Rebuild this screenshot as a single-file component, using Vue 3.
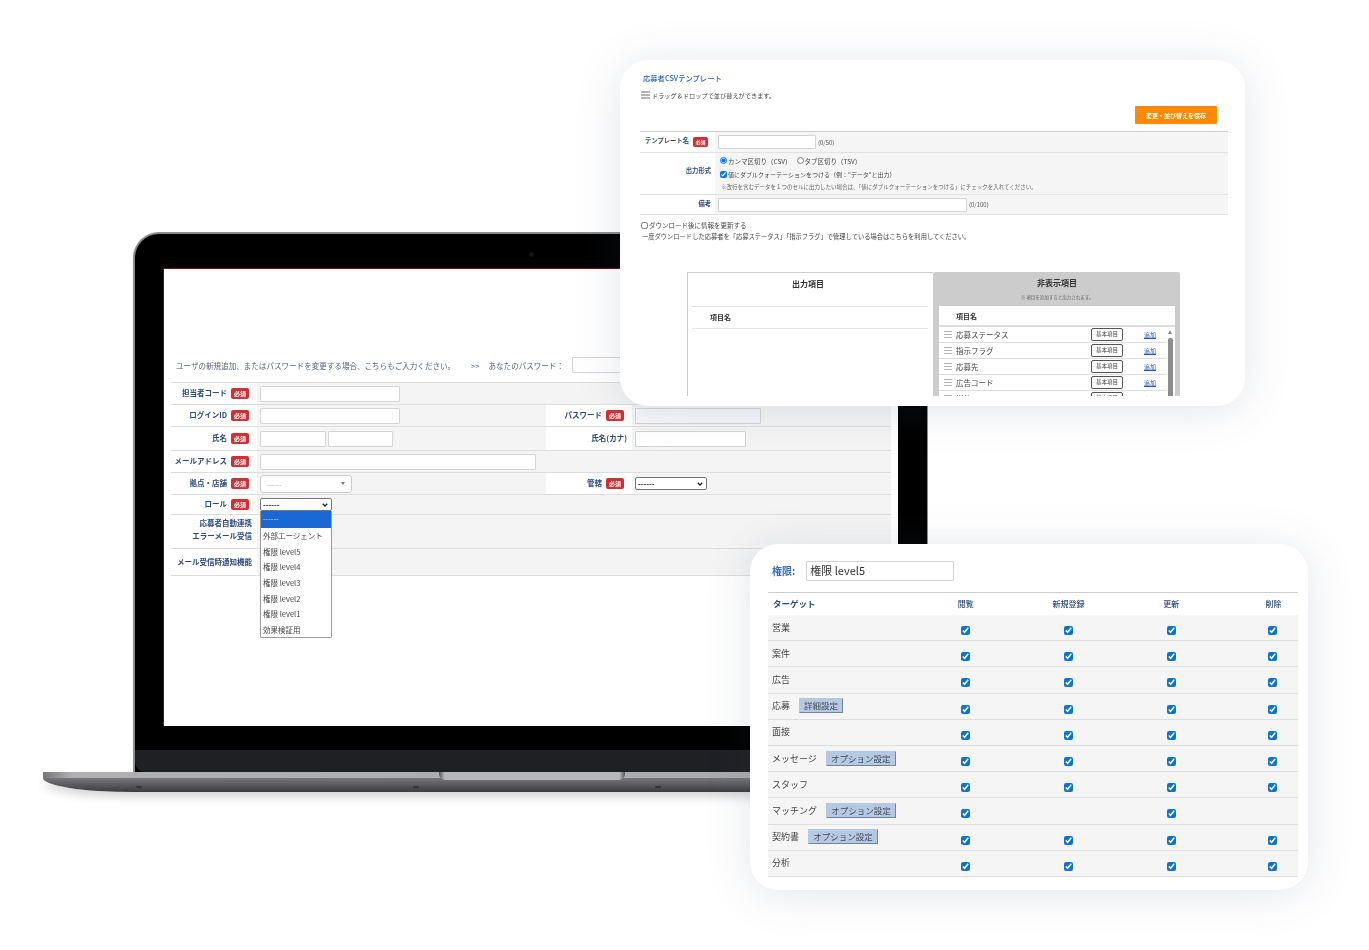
<template>
  <div class="stage">
    <!-- ノートPC -->
    <div class="laptop">
      <div class="lid">
        <span class="camera"></span>
        <div class="screen">
          <div class="pw-line">
            <span class="pw-msg">ユーザの新規追加、またはパスワードを変更する場合、こちらもご入力ください。</span>
            <span class="pw-arrow">&gt;&gt;</span>
            <span class="pw-label">あなたのパスワード：</span>
            <input class="field pw-input" />
          </div>

          <div class="form">
            <div class="row h22">
              <div class="lab"><span>担当者コード</span><em class="req">必須</em></div>
              <div class="val"><input class="field w140" /></div>
            </div>
            <div class="row h22">
              <div class="lab"><span>ログインID</span><em class="req">必須</em></div>
              <div class="val"><input class="field w140" /></div>
              <div class="lab"><span>パスワード</span><em class="req">必須</em></div>
              <div class="val val2"><input class="field w126 tinted" /></div>
            </div>
            <div class="row h24">
              <div class="lab"><span>氏名</span><em class="req">必須</em></div>
              <div class="val gap2"><input class="field w66" /><input class="field w65" /></div>
              <div class="lab plain"><span>氏名(カナ)</span></div>
              <div class="val val2"><input class="field w111" /></div>
            </div>
            <div class="row h22">
              <div class="lab"><span>メールアドレス</span><em class="req">必須</em></div>
              <div class="val"><input class="field w276" /></div>
            </div>
            <div class="row h22">
              <div class="lab"><span>拠点・店舗</span><em class="req">必須</em></div>
              <div class="val">
                <div class="fake-select">
                  <span>------</span>
                  <i class="caret"></i>
                </div>
              </div>
              <div class="lab"><span>管轄</span><em class="req">必須</em></div>
              <div class="val val2">
                <select class="native w72"><option>------</option></select>
              </div>
            </div>
            <div class="row h20">
              <div class="lab"><span>ロール</span><em class="req">必須</em></div>
              <div class="val role-cell">
                <select class="native w72 focus"><option>------</option></select>
                <ul class="dropdown">
                  <li v-for="(r, i) in roles" :key="r" :class="{ on: i === 0 }">{{ r }}</li>
                </ul>
              </div>
            </div>
            <div class="row h34">
              <div class="lab plain two">
                <span>応募者自動連携</span>
                <span>エラーメール受信</span>
              </div>
              <div class="val"></div>
            </div>
            <div class="row h27">
              <div class="lab plain"><span>メール受信時通知機能</span></div>
              <div class="val"></div>
            </div>
          </div>
        </div>
        <div class="chin"></div>
      </div>
      <div class="base">
        <div class="base-top"><span class="notch"></span></div>
        <div class="base-body">
          <i class="foot f1"></i><i class="foot f2"></i><i class="foot f3"></i>
        </div>
      </div>
    </div>

    <!-- CSVテンプレート -->
    <section class="card card-csv">
      <div class="csv-inner">
        <h2 class="csv-title">応募者CSVテンプレート</h2>
        <p class="csv-drag"><span class="burger big"><i></i><i></i><i></i></span>ドラッグ＆ドロップで並び替えができます。</p>
        <div class="csv-actions"><button class="save">変更・並び替えを保存</button></div>

        <div class="csv-table">
          <div class="csv-row r21">
            <div class="csv-lab"><span>テンプレート名</span><em class="req mini">必須</em></div>
            <div class="csv-val"><input class="field c98" /><small>(0/50)</small></div>
          </div>
          <div class="csv-row r42">
            <div class="csv-lab up"><span>出力形式</span></div>
            <div class="csv-val stack">
              <div class="opt">
                <label><input type="radio" name="fmt" checked />カンマ区切り（CSV）</label>
                <label><input type="radio" name="fmt" />タブ区切り（TSV）</label>
              </div>
              <div class="opt narrow"><label><input type="checkbox" checked />値にダブルクォーテーションをつける（例："データ"と出力）</label></div>
              <p class="hint">※改行を含むデータを１つのセルに出力したい場合は、「値にダブルクォーテーションをつける」にチェックを入れてください。</p>
            </div>
          </div>
          <div class="csv-row r20">
            <div class="csv-lab"><span>備考</span></div>
            <div class="csv-val"><input class="field c249" /><small>(0/100)</small></div>
          </div>
        </div>

        <label class="dl-check"><input type="checkbox" />ダウンロード後に情報を更新する</label>
        <p class="dl-note">一度ダウンロードした応募者を「応募ステータス」「指示フラグ」で管理している場合はこちらを利用してください。</p>

        <div class="columns">
          <div class="col-left">
            <h3>出力項目</h3>
            <div class="col-head">項目名</div>
          </div>
          <div class="col-right">
            <h3>非表示項目</h3>
            <p class="sub">※ 項目を追加すると出力されます。</p>
            <div class="hidden-list">
              <div class="hidden-head">項目名</div>
              <div v-for="item in hiddenItems" :key="item" class="hidden-row">
                <span class="burger"><i></i><i></i><i></i></span>
                <span class="hidden-name">{{ item }}</span>
                <span class="tag">基本項目</span>
                <a class="add">追加</a>
              </div>
              <div class="scroll"><i class="thumb"></i></div>
            </div>
          </div>
        </div>
      </div>
    </section>

    <!-- 権限 -->
    <section class="card card-role">
      <div class="role-inner">
        <div class="role-top">
          <label>権限:</label>
          <input class="field role-name" value="権限 level5" />
        </div>
        <div class="perm">
          <div class="perm-head">
            <span class="target">ターゲット</span>
            <span class="mid">閲覧</span>
            <span class="mid">新規登録</span>
            <span class="mid">更新</span>
            <span class="last">削除</span>
          </div>
          <div v-for="p in perms" :key="p.name" class="perm-row">
            <div class="perm-name">
              <span>{{ p.name }}</span>
              <button v-if="p.btn" class="opt-btn" :class="p.cls">{{ p.btn }}</button>
            </div>
            <span v-for="(on, i) in p.flags" :key="i" :class="i === 3 ? 'last' : 'mid'">
              <input v-if="on" type="checkbox" checked class="cb" />
            </span>
          </div>
        </div>
      </div>
    </section>
  </div>
</template>

<script setup>
const roles = ['------', '外部エージェント', '権限 level5', '権限 level4', '権限 level3', '権限 level2', '権限 level1', '効果検証用']

const hiddenItems = ['応募ステータス', '指示フラグ', '応募先', '広告コード', '媒体']

const all = [1, 1, 1, 1]
const perms = [
  { name: '営業', flags: all },
  { name: '案件', flags: all },
  { name: '広告', flags: all },
  { name: '応募', flags: all, btn: '詳細設定', cls: 'b1' },
  { name: '面接', flags: all },
  { name: 'メッセージ', flags: all, btn: 'オプション設定', cls: 'b2' },
  { name: 'スタッフ', flags: all },
  { name: 'マッチング', flags: [1, 0, 1, 0], btn: 'オプション設定', cls: 'b2' },
  { name: '契約書', flags: all, btn: 'オプション設定', cls: 'b3' },
  { name: '分析', flags: all }
]
</script>

<style>
html,
body {
  margin: 0;
  background: #fff;
}
</style>

<style scoped>
.stage {
  position: relative;
  width: 1369px;
  height: 950px;
  overflow: hidden;
  background: #fff;
  font-family: "Noto Sans CJK JP", "Liberation Sans", sans-serif;
  color: #444;
}

p, h2, h3, ul {
  margin: 0;
  padding: 0;
}

em {
  font-style: normal;
}

input, select, button {
  font-family: inherit;
  box-sizing: border-box;
  margin: 0;
}

/* ---- ノートPC ---- */
.laptop {
  position: absolute;
  left: 43px;
  top: 232px;
  width: 974px;
  z-index: 0;
}

.lid {
  position: relative;
  margin: 0 90px;
  width: 795px;
  height: 540px;
  box-sizing: border-box;
  padding: 34px 29px 0 28px;
  background: #000;
  border: 1px solid #8c8c8c;
  border-top-width: 2px;
  border-left-width: 2px;
  border-bottom: 0;
  border-radius: 26px 26px 0 0;
}

.camera {
  position: absolute;
  left: 394px;
  top: 18px;
  width: 5px;
  height: 5px;
  border-radius: 50%;
  background: #12141a;
}

.screen {
  height: 458px;
  box-sizing: border-box;
  padding: 0 7px;
  background: #fff;
  border-top: 1px solid #7a0a0a;
  border-left: 1px solid #7a0a0a;
  filter: blur(0.3px);
}

.chin {
  position: absolute;
  left: 0;
  right: 0;
  bottom: 0;
  height: 22px;
  background: #1f2024;
  border-radius: 0 0 0 10px;
}

.base-top {
  position: relative;
  z-index: 1;
  height: 6px;
  background: linear-gradient(90deg, #77777a 0, #b0b0b3 3%, #a9a9ac 100%);
}

.notch {
  position: absolute;
  left: 396px;
  top: 0;
  width: 186px;
  height: 8px;
  border-radius: 0 0 6px 6px;
  background: linear-gradient(90deg, #555 0, #b8b8bc 3%, #b8b8bc 97%, #555 100%);
}

.base-body {
  position: relative;
  height: 14px;
  background: linear-gradient(180deg, #77777b, #3c3c40);
  border-radius: 0 0 90px 90px / 0 0 14px 14px;
  box-shadow: 0 5px 8px rgba(60, 60, 70, 0.22);
}

.foot {
  position: absolute;
  top: 8px;
  width: 6px;
  height: 2px;
  border-radius: 1px;
  background: #333;
}

.f1 { left: 93px; }
.f2 { left: 370px; }
.f3 { left: 612px; }

/* ---- ユーザフォーム ---- */
.pw-line {
  display: flex;
  align-items: center;
  height: 24px;
  box-sizing: border-box;
  margin-top: 89px;
  padding: 0 0 10px 5px;
  font-size: 7.55px;
  color: #56627c;
}

.pw-arrow {
  margin-left: 16px;
}

.pw-label {
  margin-left: 9px;
}

.pw-input {
  width: 100px;
  height: 16px;
  margin-left: 8px;
}

.form {
  border-top: 1px solid #ddd;
}

.row {
  display: flex;
  box-sizing: border-box;
  border-bottom: 1px solid #ddd;
}

.h20 { height: 20px; }
.h22 { height: 22px; }
.h24 { height: 24px; }
.h27 { height: 27px; }
.h34 { height: 34px; }

.lab {
  flex: 0 0 86px;
  display: flex;
  align-items: center;
  justify-content: flex-end;
  gap: 4px;
  padding: 0 8px 2px 0;
  box-sizing: border-box;
  font-size: 7.5px;
  font-weight: 700;
  color: #2c4a80;
  white-space: nowrap;
}

.lab.plain {
  padding-right: 5px;
}

.lab.two {
  flex-direction: column;
  align-items: flex-end;
  gap: 0;
  padding-bottom: 6px;
  line-height: 13px;
}

.req {
  flex: none;
  width: 18px;
  height: 11px;
  border-radius: 2px;
  background: #d22f35;
  color: #fff;
  font-size: 6px;
  font-weight: 700;
  line-height: 11px;
  text-align: center;
  margin-top: 2px;
}

.val {
  flex: 1;
  position: relative;
  display: flex;
  align-items: center;
  box-sizing: border-box;
  padding-left: 3px;
  background: #f4f4f4;
}

.val2 {
  flex: 0 0 259px;
}

.gap2 {
  gap: 2px;
}

.field {
  display: block;
  height: 16px;
  padding: 0 3px;
  background: #fff;
  border: 1px solid #d4d4d4;
  border-radius: 1px;
  outline: none;
}

.tinted { background: #f6f7fa; }

.w65 { width: 65px; }
.w66 { width: 66px; }
.w111 { width: 111px; }
.w126 { width: 126px; }
.w140 { width: 140px; }
.w276 { width: 276px; }

.fake-select {
  display: flex;
  align-items: center;
  justify-content: space-between;
  width: 92px;
  height: 18px;
  box-sizing: border-box;
  padding: 0 6px;
  background: #fff;
  border: 1px solid #ccc;
  border-radius: 3px;
  font-size: 7px;
  color: #aaa;
}

.caret {
  border: 2px solid transparent;
  border-top: 3px solid #777;
  border-bottom: 0;
}

.native {
  appearance: none;
  height: 13px;
  padding: 0 0 0 2px;
  background: #fff url("data:image/svg+xml,%3Csvg xmlns='http://www.w3.org/2000/svg' width='6' height='4'%3E%3Cpath d='M.7.7 3 3l2.3-2.3' fill='none' stroke='%23222' stroke-width='1.3'/%3E%3C/svg%3E") no-repeat right 3px center;
  border: 1px solid #767676;
  border-radius: 2px;
  font-size: 7.5px;
  font-weight: 700;
  color: #111;
}

.w72 { width: 72px; }

.role-cell {
  align-items: flex-start;
  padding-top: 3px;
}

.dropdown {
  position: absolute;
  left: 3px;
  top: 16px;
  z-index: 2;
  width: 72px;
  box-sizing: border-box;
  list-style: none;
  background: #fff;
  border: 1px solid #999;
  border-top: 0;
  border-radius: 0 0 2px 2px;
  font-size: 7.5px;
  color: #444;
}

.dropdown li {
  height: 15.65px;
  line-height: 15.65px;
  padding-left: 2px;
  white-space: nowrap;
}

.dropdown li.on {
  height: 17px;
  background: #1a68d4;
  color: #cfe0f7;
}

/* ---- カード ---- */
.card {
  position: absolute;
  z-index: 1;
  box-sizing: border-box;
  background: #fff;
  border-radius: 28px;
  box-shadow: 0 4px 46px rgba(70, 80, 120, 0.15);
  overflow: hidden;
}

.card-csv {
  left: 620px;
  top: 60px;
  width: 625px;
  height: 346px;
  padding: 12px 17px 10px 20px;
}

.csv-inner {
  display: flex;
  flex-direction: column;
  height: 100%;
  overflow: hidden;
  filter: blur(0.3px);
}

.csv-title {
  height: 12px;
  padding-left: 3px;
  font-size: 7.3px;
  font-weight: 500;
  line-height: 12px;
  color: #2563bb;
}

.csv-drag {
  display: flex;
  align-items: center;
  height: 12px;
  margin-top: 5px;
  padding-left: 1px;
  font-size: 6.2px;
  color: #444;
}

.burger {
  display: inline-flex;
  flex-direction: column;
  justify-content: space-between;
  flex: none;
  width: 8px;
  height: 7px;
}

.burger i {
  display: block;
  height: 1px;
  background: #b5b5b5;
}

.burger.big {
  width: 9px;
  height: 8px;
  margin-right: 2px;
}

.burger.big i {
  height: 2px;
}

.csv-actions {
  display: flex;
  justify-content: flex-end;
  height: 18px;
  margin-top: 5px;
  padding-right: 11px;
}

.save {
  width: 82px;
  height: 18px;
  padding: 0;
  border: 0;
  border-radius: 1px;
  background: #ff8a00;
  color: #fff;
  font-size: 6px;
  font-weight: 700;
}

.csv-table {
  margin-top: 7px;
  border-top: 1px solid #ccc;
}

.csv-row {
  display: flex;
  box-sizing: border-box;
  border-bottom: 1px solid #e2e2e2;
}

.r21 { height: 21px; }
.r42 { height: 42px; }
.r20 { height: 20px; }

.csv-lab {
  flex: 0 0 75px;
  display: flex;
  align-items: center;
  justify-content: flex-end;
  gap: 4px;
  padding: 0 4px 3px 0;
  box-sizing: border-box;
  font-size: 6.3px;
  font-weight: 700;
  color: #2c4a80;
  white-space: nowrap;
}

.csv-lab.up {
  padding-bottom: 6px;
}

.csv-val {
  flex: 1;
  display: flex;
  align-items: center;
  gap: 2px;
  padding-left: 3px;
  background: #f5f5f5;
}

.csv-val small {
  font-size: 6px;
  color: #555;
}

.req.mini {
  width: 15px;
  height: 10px;
  font-size: 5px;
  line-height: 10px;
  margin: 2px 3px 0 0;
}

.c98 { width: 98px; height: 14px; }
.c249 { width: 249px; height: 14px; }

.stack {
  flex-direction: column;
  align-items: flex-start;
  gap: 0;
  padding-top: 1px;
}

.opt {
  display: flex;
  gap: 3px;
  height: 13px;
  align-items: center;
  font-size: 6.5px;
  color: #444;
}

.opt.narrow {
  margin-top: 1px;
  font-size: 6px;
}

.opt label {
  display: flex;
  align-items: center;
  white-space: nowrap;
}

.opt input {
  width: 7px;
  height: 7px;
  margin: 0 1px 0 2px;
}

.hint {
  margin-top: 2px;
  padding-left: 3px;
  font-size: 5.5px;
  line-height: 9px;
  color: #666;
  white-space: nowrap;
}

.dl-check {
  display: flex;
  align-items: center;
  height: 12px;
  margin-top: 4px;
  padding-left: 1px;
  font-size: 6.5px;
  color: #444;
}

.dl-check input {
  width: 7px;
  height: 7px;
  margin: 0 1px 0 0;
}

.dl-note {
  height: 11px;
  line-height: 11px;
  margin-top: 0;
  padding-left: 2px;
  font-size: 6.27px;
  color: #444;
  white-space: nowrap;
}

.columns {
  display: flex;
  flex: 1;
  min-height: 0;
  margin: 30px 0 0 47px;
  width: 493px;
}

.col-left {
  flex: 0 0 246px;
  box-sizing: border-box;
  padding: 0 5px 0 0;
  border: 1px solid #ccc;
  border-width: 1px 0 0 1px;
}

.col-left h3,
.col-right h3 {
  height: 22px;
  font-size: 8px;
  font-weight: 700;
  line-height: 22px;
  text-align: center;
  color: #333;
}

.col-head {
  height: 21px;
  margin: 11px 0 0 4px;
  padding-left: 18px;
  border: 1px solid #e4e4e4;
  border-width: 1px 0;
  font-size: 7px;
  font-weight: 700;
  line-height: 20px;
  color: #333;
}

.col-right {
  flex: 1;
  display: flex;
  flex-direction: column;
  padding: 0 5px 0 6px;
  background: #ccc;
  border-radius: 2px 2px 0 0;
}

.sub {
  height: 12px;
  font-size: 4.5px;
  line-height: 6px;
  text-align: center;
  color: #666;
}

.hidden-list {
  position: relative;
  flex: 1;
  background: #fff;
  overflow: hidden;
}

.hidden-head {
  height: 19px;
  padding-left: 17px;
  border-bottom: 2px solid #ddd;
  font-size: 7px;
  font-weight: 700;
  line-height: 20px;
  color: #333;
}

.hidden-row {
  display: flex;
  align-items: center;
  width: 228px;
  height: 16px;
  box-sizing: border-box;
  padding-left: 5px;
  border-bottom: 1px solid #ddd;
  font-size: 7.5px;
  color: #444;
}

.hidden-name {
  width: 135px;
  margin-left: 4px;
}

.tag {
  flex: none;
  width: 32px;
  height: 13px;
  box-sizing: border-box;
  border: 1px solid #555;
  border-radius: 2px;
  font-size: 5.5px;
  line-height: 11px;
  text-align: center;
}

.add {
  margin-left: 21px;
  font-size: 6px;
  color: #2456b8;
  text-decoration: underline;
}

.scroll {
  position: absolute;
  right: 2px;
  top: 23px;
  bottom: 0;
  width: 5px;
}

.scroll::before {
  content: "";
  position: absolute;
  left: 0;
  top: 1px;
  border: 2.5px solid transparent;
  border-top: 0;
  border-bottom: 4px solid #888;
}

.thumb {
  position: absolute;
  left: 0;
  right: 0;
  top: 9px;
  bottom: 0;
  background: #8c8c8c;
  border-radius: 2px 2px 0 0;
}

/* ---- 権限カード ---- */
.card-role {
  left: 750px;
  top: 544px;
  width: 558px;
  height: 346px;
  padding: 17px 10px 0 18px;
}

.role-inner {
  filter: blur(0.25px);
}

.role-top {
  display: flex;
  align-items: center;
  gap: 11px;
  height: 20px;
  padding-left: 4px;
}

.role-top label {
  padding-bottom: 2px;
  font-size: 10px;
  font-weight: 700;
  color: #3a6fc6;
}

.role-name {
  width: 148px;
  height: 20px;
  padding-bottom: 2px;
  font-size: 11px;
  color: #333;
}

.perm {
  margin-top: 11px;
  border-top: 1px solid #ccc;
}

.perm-head,
.perm-row {
  display: grid;
  grid-template-columns: 146.5px repeat(3, 102.67px) 76px;
  align-items: center;
}

.perm-head {
  height: 22px;
  box-sizing: border-box;
  padding-bottom: 2px;
  font-size: 8px;
  font-weight: 500;
  color: #2c4a80;
}

.target {
  padding-left: 5px;
  font-size: 8.5px;
  font-weight: 700;
}

.mid {
  display: flex;
  justify-content: center;
}

.last {
  display: flex;
  justify-content: flex-start;
  padding-left: 46px;
}

.perm-head .last {
  padding-left: 43px;
}

.perm-row {
  height: 26.2px;
  box-sizing: border-box;
  background: #f5f5f5;
  border-bottom: 1px solid #ddd;
}

.perm-name {
  display: flex;
  align-items: center;
  height: 100%;
  padding: 0 0 1px 4px;
  box-sizing: border-box;
  font-size: 9px;
  color: #444;
  white-space: nowrap;
}

.cb {
  display: block;
  width: 9px;
  height: 9px;
  margin: 6px 0 0;
  accent-color: #0a74d6;
}

.opt-btn {
  height: 15px;
  padding: 0 4px;
  border: 1px solid #b4c8e0;
  border-right-color: #6d84a4;
  border-bottom-color: #6d84a4;
  border-radius: 1px;
  background: #b6c9e2;
  font-size: 8.5px;
  line-height: 13px;
  color: #404a5a;
  white-space: nowrap;
}

.b1 { width: 44px; margin-left: 9px; }
.b2 { width: 70px; margin-left: 9px; }
.b3 { width: 70px; margin-left: 9px; }
</style>
